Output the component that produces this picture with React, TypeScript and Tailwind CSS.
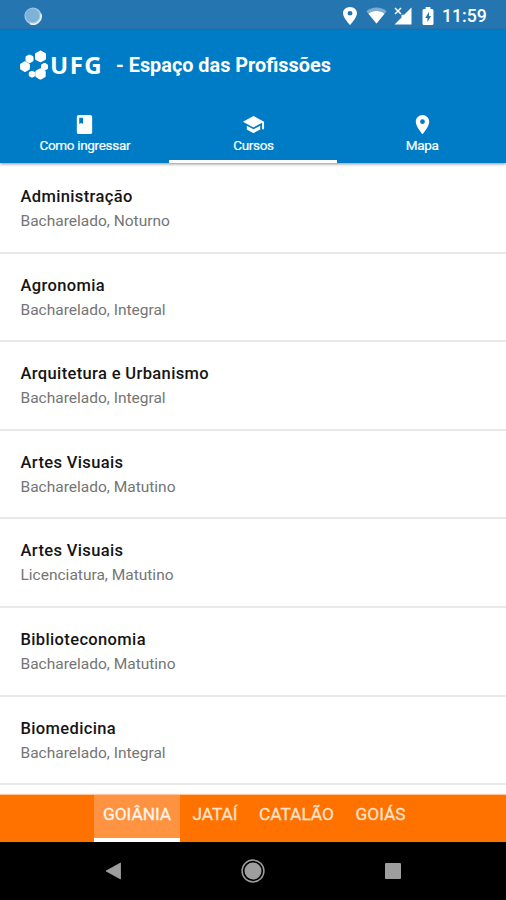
import React from "react";

const courses = [
  ["Administração", "Bacharelado, Noturno"],
  ["Agronomia", "Bacharelado, Integral"],
  ["Arquitetura e Urbanismo", "Bacharelado, Integral"],
  ["Artes Visuais", "Bacharelado, Matutino"],
  ["Artes Visuais", "Licenciatura, Matutino"],
  ["Biblioteconomia", "Bacharelado, Matutino"],
  ["Biomedicina", "Bacharelado, Integral"],
];

const PIN =
  "M12 2C8.13 2 5 5.13 5 9c0 5.25 7 13 7 13s7-7.75 7-13c0-3.87-3.13-7-7-7zm0 9.5a2.5 2.5 0 0 1 0-5 2.5 2.5 0 0 1 0 5z";

function StatusBar() {
  return (
    <div className="flex h-[30px] shrink-0 items-center bg-[#2575b0] pt-[1px] pl-[24px] pr-[19px] text-white">
      <svg className="h-[18px] w-[18px]" viewBox="0 0 18 18">
        <circle cx="9" cy="9" r="8.6" fill="#a5cae4" />
        <circle cx="8.4" cy="8.4" r="7" fill="#7fb2d8" />
        <path d="M16.800 7A8 8 0 0 1 6 16.600" fill="none" stroke="#e6f2fa" strokeWidth="1.6" />
      </svg>
      <div className="ml-auto flex items-center">
        <svg className="mr-[9px] h-[18px] w-[14px]" viewBox="5 2 14 20" preserveAspectRatio="none" fill="currentColor">
          <path d={PIN} />
        </svg>
        <svg className="mr-[7px] h-[17px] w-[21px]" viewBox="0 0 21 17">
          <path d="M.4 4.200C6.200-.7 14.800-.7 20.600 4.200L10.500 16.500z" fill="#fff" fillOpacity=".4" />
          <path d="M2.500 6.700c4.600-3.500 11.400-3.500 16 0l-8 9.800z" fill="#fff" />
        </svg>
        <svg className="mr-[10px] h-[18px] w-[18px]" viewBox="0 0 18 18">
          <path d="M17.500.5v17H.5l7-7V7.800h2.700z" fill="#fff" />
          <path d="M1 1l6 6M7 1L1 7" stroke="#fff" strokeWidth="1.500" />
        </svg>
        <svg className="mr-[8px] h-[20px] w-[12px]" viewBox="0 0 12 20">
          <path d="M3.600 1h4.800v2H10a1.500 1.500 0 0 1 1.500 1.500v13A1.500 1.500 0 0 1 10 19H2A1.500 1.500 0 0 1 .5 17.500v-13A1.500 1.500 0 0 1 2 3h1.600z" fill="#fff" />
          <path d="M7 5.800L3.200 12H5.400v4L9 10H7z" fill="#2575b0" />
        </svg>
        <span className="w-[45px] whitespace-nowrap text-[17.700px] leading-5 font-medium">11:59</span>
      </div>
    </div>
  );
}

function Brand() {
  return (
    <div className="flex h-[70px] items-center pl-[19px]">
      <svg className="h-[30px] w-[30px]" viewBox="0 0 30 30" fill="#fff" stroke="#fff" strokeWidth="3" strokeLinejoin="round">
        <path d="M21.500 2l4 2.200v4.400l-4 2.200-4-2.200V4.200z" />
        <path d="M10.500 6l2.500 1.400v2.800l-2.500 1.400L8 10.200V7.400z" />
        <path d="M6 12.800l3.400 1.900v3.800L6 20.400l-3.400-1.900v-3.800z" />
        <path d="M25.500 14.400l2 1.100v2.400l-2 1.100-2-1.100v-2.400z" />
        <path d="M13 22.300l1.700.9v2l-1.700.9-1.700-.9v-2z" />
        <path d="M21.500 19.800l3.700 2.100v4.100l-3.700 2.100-3.700-2.100v-4.100z" />
      </svg>
      <span className="ml-[1px] w-[53px] whitespace-nowrap font-['Open_Sans',sans-serif] text-[24px] leading-7 font-bold tracking-[1.500px]">UFG</span>
      <span className="ml-[13px] whitespace-nowrap pt-[1px] text-[19.850px] leading-6 font-bold">- Espaço das Profissões</span>
    </div>
  );
}

function MainTab({ label, active = false, children }: { label: string; active?: boolean; children: React.ReactNode }) {
  return (
    <div className={`flex flex-1 flex-col items-center border-b-[3px] pl-px pt-[13px] ${active ? "border-white" : "border-transparent"}`}>
      <svg className="h-[23px] w-[23px]" viewBox="0 0 24 24" fill="currentColor">{children}</svg>
      <span className="whitespace-nowrap text-[13.500px] leading-[18px] tracking-[-0.320px] [-webkit-text-stroke:0.2px_white]">{label}</span>
    </div>
  );
}

function CityTab({ label, active = false, className }: { label: string; active?: boolean; className: string }) {
  return (
    <div className={`flex h-full justify-center border-b-[4px] pt-[9px] ${className} ${active ? "border-white bg-[#ff9341] text-[#fff5ec]" : "border-transparent text-[#ffe3ce]"}`}>
      <span className="whitespace-nowrap text-[17.300px] leading-[21px] [-webkit-text-stroke:0.3px_currentColor]">{label}</span>
    </div>
  );
}

export default function App() {
  return (
    <div className="flex h-[900px] w-[506px] flex-col overflow-hidden bg-white font-[Roboto,sans-serif]">
      <StatusBar />
      <header className="z-10 flex h-[133px] shrink-0 flex-col bg-[#007cc6] text-white shadow-[0_1px_3px_rgba(0,0,0,0.45)]">
        <Brand />
        <nav className="flex flex-1">
          <MainTab label="Como ingressar">
            <path fillRule="evenodd" d="M6 2h12a2 2 0 0 1 2 2v16a2 2 0 0 1-2 2H6a2 2 0 0 1-2-2V4a2 2 0 0 1 2-2zm.500 3v6.500l2-1 2 1V5z" />
          </MainTab>
          <MainTab label="Cursos" active>
            <path d="M5 13.180v4L12 21l7-3.820v-4L12 17l-7-3.820zM12 3L1 9l11 6 9-4.910V17h2V9L12 3z" />
          </MainTab>
          <MainTab label="Mapa"><path d={PIN} /></MainTab>
        </nav>
      </header>
      <main className="min-h-0 flex-1 overflow-hidden pt-[1px]">
        {courses.map(([name, detail], i) => (
          <div key={i} className="flex h-[88.600px] flex-col pt-[21px]">
            <span className="pl-[20.500px] whitespace-nowrap text-[16.500px] leading-6 font-medium tracking-[0.360px] text-[#151515]">{name}</span>
            <span className="pl-[20.500px] whitespace-nowrap text-[15.500px] leading-6 text-[#757575]">{detail}</span>
            <span className="mt-[18.600px] h-[2px] shrink-0 bg-[#e9e9e9]" />
          </div>
        ))}
      </main>
      <nav className="flex h-[47px] shrink-0 bg-[#ff7200] pl-[94px] shadow-[0_-1px_1px_rgba(255,114,0,0.4)]">
        <CityTab label="GOIÂNIA" active className="w-[86px]" />
        <CityTab label="JATAÍ" className="w-[70px]" />
        <CityTab label="CATALÃO" className="w-[93px]" />
        <CityTab label="GOIÁS" className="w-[75px]" />
      </nav>
      <footer className="flex h-[58px] shrink-0 items-center bg-black text-[#9e9e9e]">
        <svg className="ml-[105px] h-[18px] w-[17px]" viewBox="0 0 17 18" fill="currentColor">
          <path d="M15.500 1v16L1 9z" stroke="currentColor" strokeWidth=".8" strokeLinejoin="round" />
        </svg>
        <svg className="ml-[119px] h-6 w-6" viewBox="0 0 24 24" fill="currentColor">
          <circle cx="12" cy="12" r="8.500" />
          <circle cx="12" cy="12" r="10.900" fill="none" stroke="currentColor" strokeWidth="1.500" />
        </svg>
        <span className="ml-[120px] h-4 w-4 rounded-[1px] bg-[#9e9e9e]" />
      </footer>
    </div>
  );
}
